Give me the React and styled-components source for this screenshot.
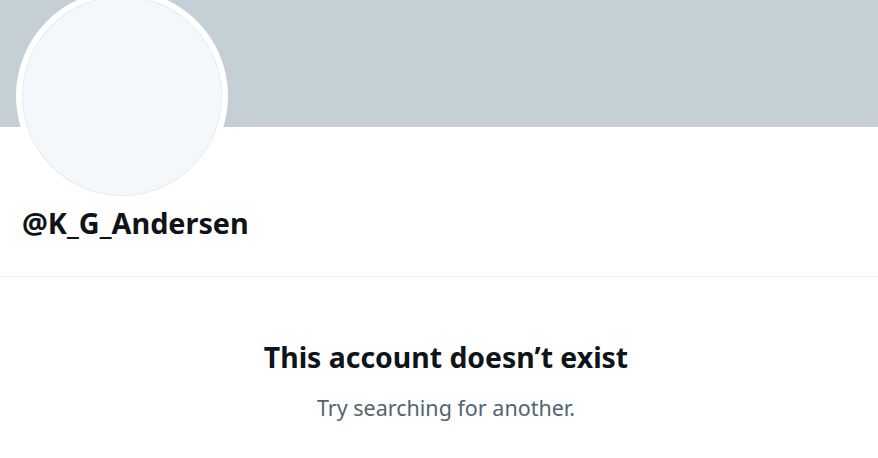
import React from "react";
import styled, { createGlobalStyle } from "styled-components";

const GlobalStyle = createGlobalStyle`
  body {
    margin: 0;
    background: #fff;
    font-family: "Noto Sans", "Open Sans", sans-serif;
    color: #0f1419;
  }
`;

export const App = () => {
  return (
    <>
      <GlobalStyle />
      <Page>
        <Banner />
        <Header>
          <Avatar>
            <AvatarInner />
          </Avatar>
          <Handle>@K_G_Andersen</Handle>
        </Header>
        <Empty>
          <Title>This account doesn’t exist</Title>
          <Hint>Try searching for another.</Hint>
        </Empty>
      </Page>
    </>
  );
};

const Page = styled.div`
  width: 878px;
  height: 458px;
  overflow: hidden;
  background: #fff;
`;

const Banner = styled.div`
  height: 127px;
  background: #c4cfd6;
`;

const Header = styled.div`
  display: flex;
  flex-direction: column;
  align-items: flex-start;
  padding: 0 0 0 16px;
  height: 150px;
  border-bottom: 1px solid #eff3f4;
  box-sizing: border-box;
`;

const Avatar = styled.div`
  position: relative;
  flex: none;
  width: 212px;
  height: 212px;
  margin-top: -137px;
  border-radius: 50%;
  background: #fff;
  padding: 6px;
  box-sizing: border-box;
`;

const AvatarInner = styled.div`
  width: 100%;
  height: 100%;
  border-radius: 50%;
  background: #f5f8fa;
  box-shadow: inset 0 0 0 1px #e6ecf0;
`;

const Handle = styled.div`
  margin: 4px 0 0 6px;
  font-size: 28.8px;
  font-weight: 700;
  line-height: 34px;
`;

const Empty = styled.div`
  display: flex;
  flex-direction: column;
  align-items: center;
  padding: 62px 0 0 14px;
`;

const Title = styled.div`
  font-size: 28.4px;
  font-weight: 700;
  line-height: 36px;
`;

const Hint = styled.div`
  margin-top: 19px;
  font-size: 21.5px;
  line-height: 28px;
  color: #536471;
`;

export default App;
